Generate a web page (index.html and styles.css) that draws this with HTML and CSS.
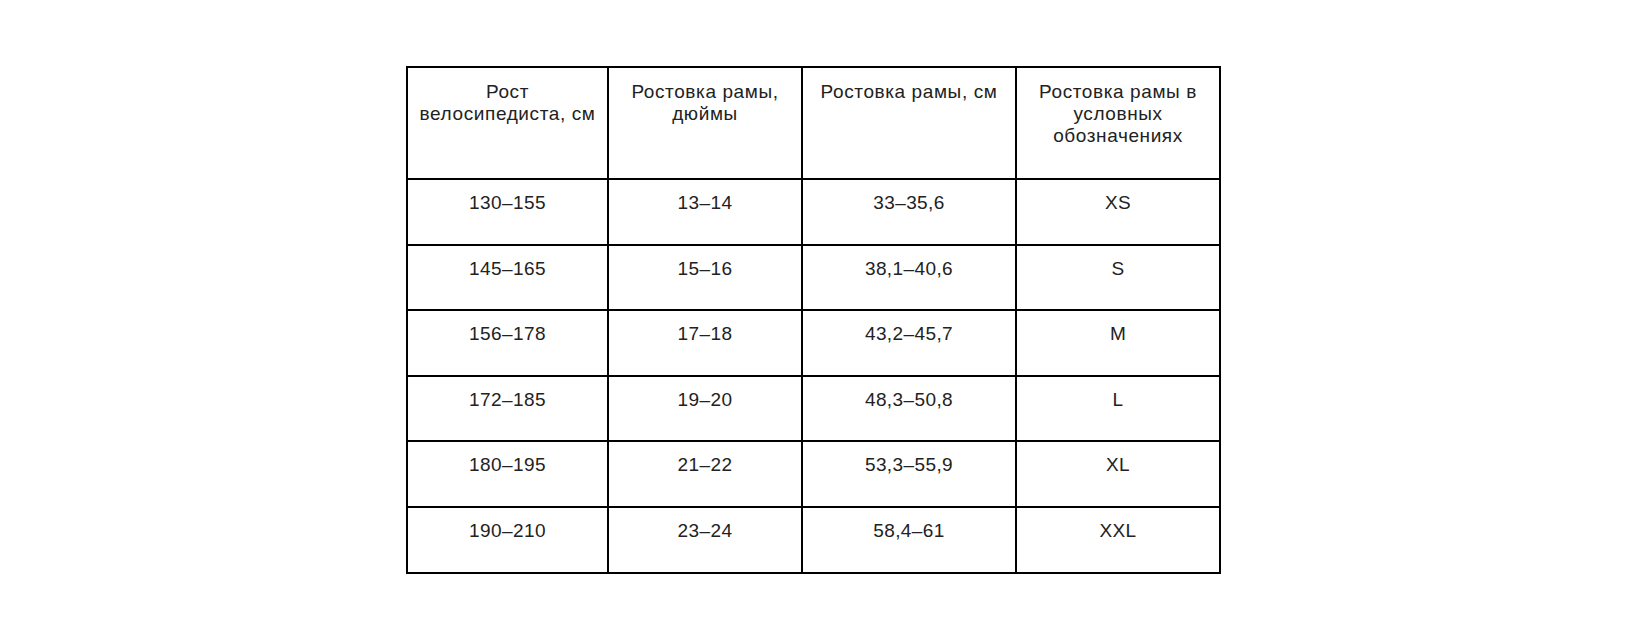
FILE: index.html
```html
<!DOCTYPE html>
<html lang="ru">
<head>
<meta charset="utf-8">
<title>Размеры рам</title>
<link rel="stylesheet" href="styles.css">
</head>
<body>
<div class="page">
  <table class="sizes">
    <colgroup>
      <col class="c1"><col class="c2"><col class="c3"><col class="c4">
    </colgroup>
    <thead>
      <tr class="head">
        <th>Рост велосипедиста, см</th>
        <th>Ростовка рамы, дюймы</th>
        <th>Ростовка рамы, см</th>
        <th>Ростовка рамы в условных обозначениях</th>
      </tr>
    </thead>
    <tbody>
      <tr class="r-a"><td>130–155</td><td>13–14</td><td>33–35,6</td><td>XS</td></tr>
      <tr class="r-b"><td>145–165</td><td>15–16</td><td>38,1–40,6</td><td>S</td></tr>
      <tr class="r-a"><td>156–178</td><td>17–18</td><td>43,2–45,7</td><td>M</td></tr>
      <tr class="r-b"><td>172–185</td><td>19–20</td><td>48,3–50,8</td><td>L</td></tr>
      <tr class="r-a"><td>180–195</td><td>21–22</td><td>53,3–55,9</td><td>XL</td></tr>
      <tr class="r-a"><td>190–210</td><td>23–24</td><td>58,4–61</td><td>XXL</td></tr>
    </tbody>
  </table>
</div>
</body>
</html>
```

FILE: styles.css
```css
html, body {
  margin: 0;
  padding: 0;
  background: #fff;
}

.page {
  padding: 66px 0 0 406px;
}

.sizes {
  border-collapse: collapse;
  table-layout: fixed;
  width: 813px;
  font-family: "Liberation Sans", Arial, sans-serif;
  font-size: 19px;
  line-height: 22px;
  letter-spacing: 0.4px;
  color: #222;
}

.c1 { width: 201px; }
.c2 { width: 194px; }
.c3 { width: 214px; }
.c4 { width: 204px; }

.sizes th,
.sizes td {
  border: 2px solid #000;
  padding: 12px 4px 0;
  text-align: center;
  vertical-align: top;
  font-weight: normal;
}

.sizes th {
  padding-top: 13px;
  letter-spacing: 0.6px;
}

.head { height: 112px; }
.r-a { height: 66px; }
.r-b { height: 65px; }
```
